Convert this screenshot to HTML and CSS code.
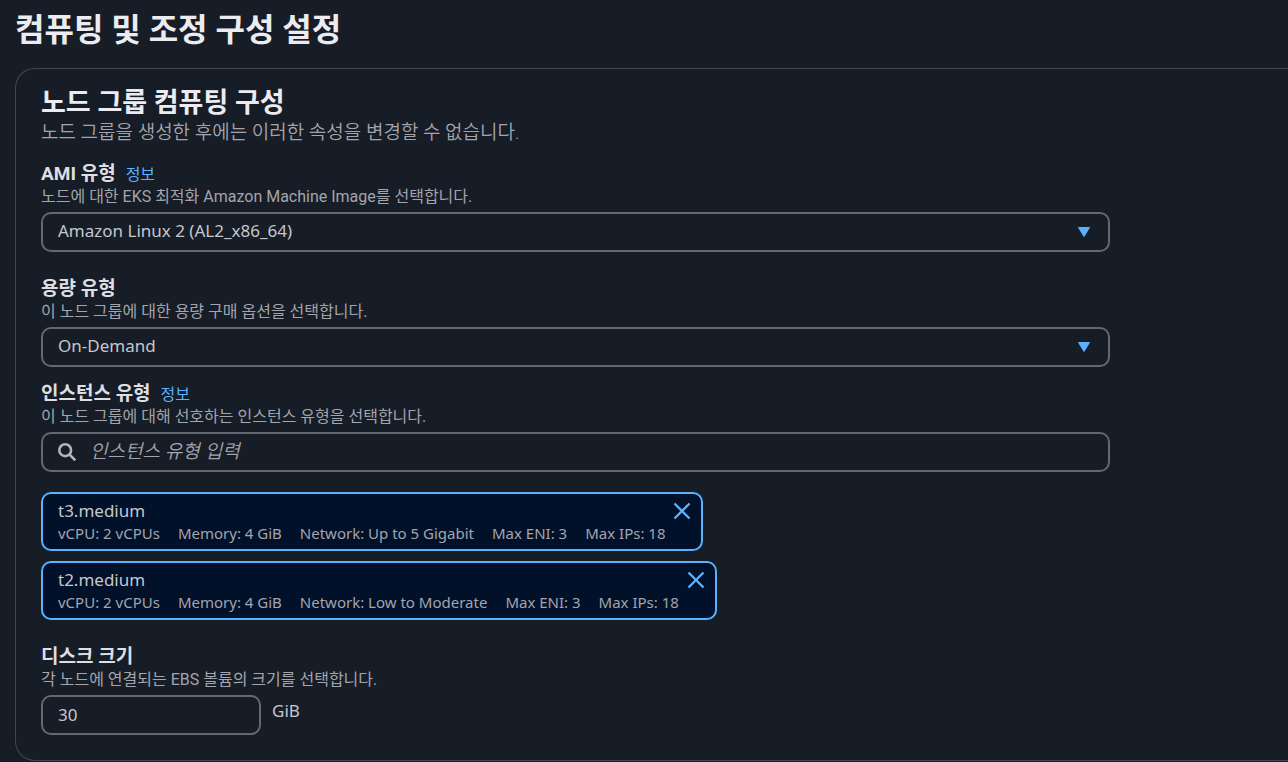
FILE: index.html
```html
<!DOCTYPE html>
<html lang="ko">
<head>
<meta charset="utf-8">
<meta name="viewport" content="width=device-width, initial-scale=1">
<title>컴퓨팅 및 조정 구성 설정</title>
<link rel="stylesheet" href="styles.css">
</head>
<body>
<main class="page">
  <h1 class="page-title">컴퓨팅 및 조정 구성 설정</h1>
  <section class="card">
    <h2 class="card-title">노드 그룹 컴퓨팅 구성</h2>
    <p class="card-text">노드 그룹을 생성한 후에는 이러한 속성을 변경할 수 없습니다.</p>
    <form class="form">
      <div class="field">
        <div class="field-head"><label class="label" for="ami">AMI 유형</label><a class="info" href="#">정보</a></div>
        <p class="hint">노드에 대한 EKS 최적화 Amazon Machine Image를 선택합니다.</p>
        <div class="select-wrap">
          <select class="control select" id="ami"><option>Amazon Linux 2 (AL2_x86_64)</option></select>
          <svg class="caret" viewBox="0 0 14 12" aria-hidden="true"><path d="M1.5 1.5h11L7 10.5z"/></svg>
        </div>
      </div>
      <div class="field">
        <div class="field-head"><label class="label" for="capacity">용량 유형</label></div>
        <p class="hint">이 노드 그룹에 대한 용량 구매 옵션을 선택합니다.</p>
        <div class="select-wrap">
          <select class="control select" id="capacity"><option>On-Demand</option></select>
          <svg class="caret" viewBox="0 0 14 12" aria-hidden="true"><path d="M1.5 1.5h11L7 10.5z"/></svg>
        </div>
      </div>
      <div class="field field-close">
        <div class="field-head"><label class="label" for="instance">인스턴스 유형</label><a class="info" href="#">정보</a></div>
        <p class="hint">이 노드 그룹에 대해 선호하는 인스턴스 유형을 선택합니다.</p>
        <div class="control search">
          <svg class="search-icon" viewBox="0 0 18 18" aria-hidden="true"><circle cx="7.2" cy="7.2" r="5.9"/><path d="M11.5 11.5l5.8 5.8"/></svg>
          <input class="search-input" id="instance" type="text" placeholder="인스턴스 유형 입력">
        </div>
        <ul class="tokens">
          <li class="token">
            <div class="token-body">
              <span class="token-name">t3.medium</span>
              <span class="token-tags"><span>vCPU: 2 vCPUs</span><span>Memory: 4 GiB</span><span>Network: Up to 5 Gigabit</span><span>Max ENI: 3</span><span>Max IPs: 18</span></span>
            </div>
            <button class="remove" type="button" aria-label="t3.medium 제거"><svg class="remove-icon" viewBox="0 0 18 18" aria-hidden="true"><path d="M1.5 1.5l15 15M16.5 1.5l-15 15"/></svg></button>
          </li>
          <li class="token">
            <div class="token-body">
              <span class="token-name">t2.medium</span>
              <span class="token-tags"><span>vCPU: 2 vCPUs</span><span>Memory: 4 GiB</span><span>Network: Low to Moderate</span><span>Max ENI: 3</span><span>Max IPs: 18</span></span>
            </div>
            <button class="remove" type="button" aria-label="t2.medium 제거"><svg class="remove-icon" viewBox="0 0 18 18" aria-hidden="true"><path d="M1.5 1.5l15 15M16.5 1.5l-15 15"/></svg></button>
          </li>
        </ul>
      </div>
      <div class="field">
        <div class="field-head"><label class="label" for="disk">디스크 크기</label></div>
        <p class="hint">각 노드에 연결되는 EBS 볼륨의 크기를 선택합니다.</p>
        <div class="disk">
          <input class="control disk-input" id="disk" type="text" inputmode="numeric" value="30">
          <span class="unit">GiB</span>
        </div>
      </div>
    </form>
  </section>
</main>
</body>
</html>
```
FILE: styles.css
```css
* { box-sizing: border-box; }

body {
  margin: 0;
  background: #161d26;
  color: #c6c6cd;
  font-family: "Noto Sans", "Noto Sans CJK KR", sans-serif;
  font-size: 17px;
}

h1, h2, p, ul { margin: 0; padding: 0; }

.page-title, .card-title, .card-text, .field-head, .hint {
  font-family: Roboto, "Noto Sans CJK KR", sans-serif;
}

.page { padding: 10px 0 0 15px; }

.page-title {
  color: #ebebf0;
  font-size: 32px;
  line-height: 40px;
  margin-bottom: 18px;
}

.card {
  border: 1px solid #424650;
  border-right: 0;
  border-radius: 20px 0 0 20px;
  padding: 17px 0 25px 25px;
}

.card-title {
  color: #ebebf0;
  font-size: 27px;
  line-height: 34px;
}

.card-text {
  color: #a4a4ad;
  font-size: 19px;
  font-weight: 350;
  line-height: 26px;
  margin-bottom: 15px;
}

.form {
  display: grid;
  grid-template-columns: 6fr 1fr;
  row-gap: 24px;
}

.field { grid-column: 1; }
.field-close { margin-top: -10px; }

.field-head {
  display: flex;
  align-items: baseline;
  gap: 10px;
  height: 24px;
}

.label {
  color: #dedee3;
  font-size: 19px;
  font-weight: 700;
  line-height: 26px;
}

.info {
  color: #5cb1ff;
  font-size: 16px;
  line-height: 24px;
  text-decoration: none;
}

.hint {
  color: #a4a4ad;
  font-size: 16px;
  line-height: 24px;
  margin-bottom: 3px;
}

.control {
  display: block;
  width: 100%;
  height: 40px;
  border: 2px solid #656871;
  border-radius: 10px;
  background: #161d26;
  color: #c6c6cd;
  font: inherit;
  padding: 0 15px;
}

.select-wrap {
  display: grid;
  align-items: center;
}

.select-wrap > * { grid-area: 1 / 1; }

.select {
  appearance: none;
  padding-bottom: 4px;
}

.caret {
  width: 14px;
  height: 12px;
  justify-self: end;
  margin-right: 19px;
  fill: #5cb1ff;
  stroke: #5cb1ff;
  stroke-width: 1;
  stroke-linejoin: round;
  pointer-events: none;
}

.search {
  display: flex;
  align-items: center;
  gap: 14px;
}

.search-icon {
  width: 18px;
  height: 18px;
  fill: none;
  stroke: #b4b4bb;
  stroke-width: 2.6;
}

.search-input {
  flex: 1;
  min-width: 0;
  border: 0;
  background: transparent;
  color: #c6c6cd;
  font: inherit;
  font-size: 19px;
  padding: 0 0 2px;
}

.search-input::placeholder {
  color: #a4a4ad;
  font-style: italic;
  font-weight: 350;
  opacity: 1;
}

.tokens {
  list-style: none;
  display: flex;
  flex-direction: column;
  align-items: flex-start;
  gap: 10px;
  margin-top: 20px;
}

.token {
  display: flex;
  align-items: flex-start;
  gap: 8px;
  border: 2px solid #5cb1ff;
  border-radius: 10px;
  background: #001129;
  padding: 5px 10px 5px 15px;
}

.token-body { display: flex; flex-direction: column; }
.token-name { line-height: 24px; }

.token-tags {
  display: flex;
  flex-wrap: wrap;
  column-gap: 18px;
  color: #a4a4ad;
  font-size: 15px;
  line-height: 21px;
}

.remove {
  display: flex;
  border: 0;
  background: transparent;
  padding: 3px 0;
  cursor: pointer;
}

.remove-icon {
  width: 18px;
  height: 18px;
  fill: none;
  stroke: #5cb1ff;
  stroke-width: 2.4;
}

.disk {
  display: flex;
  gap: 11px;
}

.disk-input {
  width: 220px;
  padding-bottom: 2px;
}

.unit { line-height: 32px; }
```
